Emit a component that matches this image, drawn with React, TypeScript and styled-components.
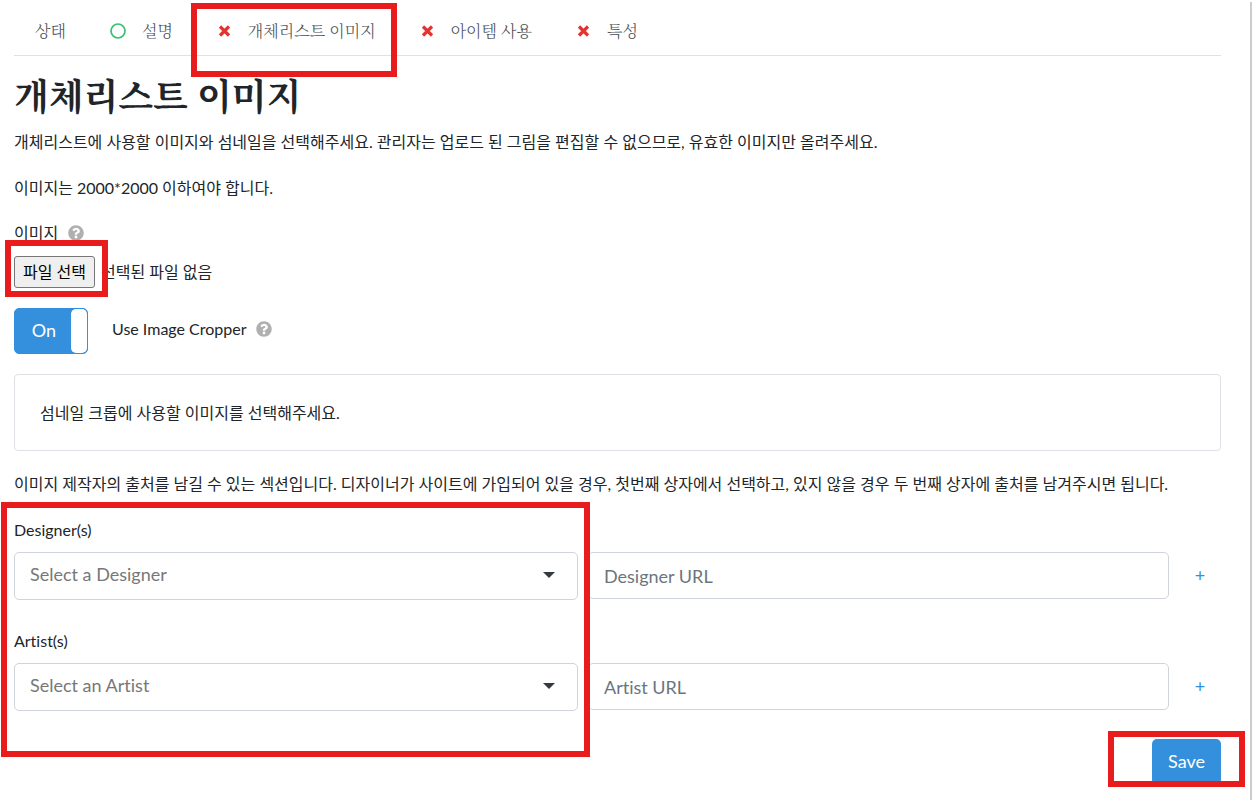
import React, { useRef, useState } from "react";
import styled, { createGlobalStyle } from "styled-components";

const sans = `Lato, "Noto Sans CJK KR", sans-serif`;
const serif = `"Noto Serif CJK KR", "Noto Sans CJK KR", serif`;
const blue = "#3490dc";
const line = "#dee2e6";
const field = "#ced4da";

const GlobalStyle = createGlobalStyle`
  *, *::before, *::after { box-sizing: border-box; }
  body {
    margin: 0;
    background: #fff;
    color: #212529;
    font: 16px/24px ${sans};
    font-variant-ligatures: none;
  }
  button, input, select { font-family: inherit; font-variant-ligatures: none; }
  h1, p { margin: 0; }
`;

const Page = styled.main`
  margin-top: 2px;
  min-height: calc(100vh - 2px);
  padding: 0 29px 12px 14px;
  border-right: 2px solid #ccc;
`;

const Tabs = styled.nav`
  display: flex;
  align-items: center;
  height: 54px;
  padding: 4px 22px 0 21px;
  gap: 44px;
  border-bottom: 1px solid ${line};
`;

const Tab = styled.a`
  position: relative;
  display: flex;
  align-items: center;
  gap: 16px;
  color: #495057;
  font: 300 16px/24px ${serif};
  text-decoration: none;
  white-space: nowrap;
`;

const Highlight = styled.span<{ $inset: string }>`
  position: absolute;
  inset: ${(p) => p.$inset};
  z-index: 2;
  border: 6px solid #e81c1c;
  pointer-events: none;
`;

const Title = styled.h1`
  margin-top: 15px;
  font: 700 36px/48px ${serif};
`;

const Paragraph = styled.p<{ $top: number }>`
  margin-top: ${(p) => p.$top}px;
`;

const LabelRow = styled.div`
  display: flex;
  align-items: center;
  gap: 10px;
  margin-top: 21px;
`;

const FileRow = styled.div`
  display: flex;
  align-items: center;
  gap: 6px;
  margin-top: 11px;
`;

const Anchor = styled.span`
  position: relative;
  display: inline-flex;
`;

const FileButton = styled.button`
  height: 32px;
  padding: 0 8px 2px;
  border: 1px solid #767676;
  border-radius: 3px;
  background: #efefef;
  color: #000;
  font-size: 16px;
`;

const ToggleRow = styled.div`
  display: flex;
  align-items: center;
  gap: 24px;
  margin-top: 20px;
`;

const ToggleCaption = styled.div`
  display: flex;
  align-items: center;
  gap: 10px;
  padding-bottom: 4px;
`;

const Toggle = styled.label`
  position: relative;
  display: flex;
  width: 74px;
  height: 46px;
  overflow: hidden;
  border: 1px solid ${blue};
  border-radius: 5px;
  background: ${blue};
  color: #fff;
  font-size: 18px;
  line-height: 43px;
  cursor: pointer;
`;

const ToggleInput = styled.input`
  position: absolute;
  inset: 0;
  margin: 0;
  opacity: 0;
`;

const ToggleText = styled.span`
  flex: 1;
  padding-left: 2px;
  text-align: center;
`;

const Knob = styled.span`
  width: 16px;
  border-radius: 5px;
  background: #fff;
`;

const Card = styled.section`
  margin-top: 20px;
  padding: 26px 25px 25px;
  border: 1px solid ${line};
  border-radius: 4px;
`;

const Credits = styled.div`
  display: grid;
  grid-template-columns: 564fr 10px 581fr 52px;
  grid-template-rows: 24px 67px 24px 48px;
  row-gap: 10px;
  margin-top: 22px;
`;

const CreditsHighlight = styled.span`
  grid-area: 1 / 1 / 5 / 2;
  z-index: 2;
  margin: -16px -12px -46px -13px;
  border: 6px solid #e81c1c;
  pointer-events: none;
`;

const FieldLabel = styled.label<{ $row: number }>`
  grid-row: ${(p) => p.$row};
  grid-column: 1;
`;

const SelectBox = styled.div<{ $row: number }>`
  position: relative;
  grid-row: ${(p) => p.$row};
  grid-column: 1;
`;

const Select = styled.select`
  appearance: none;
  width: 100%;
  height: 48px;
  padding: 0 40px 4px 15px;
  border: 1px solid ${field};
  border-radius: 5px;
  background: #fff;
  color: #777;
  font-size: 18px;
`;

const Caret = styled.svg`
  position: absolute;
  top: 20px;
  right: 23px;
  pointer-events: none;
`;

const UrlInput = styled.input<{ $row: number }>`
  grid-row: ${(p) => p.$row};
  grid-column: 3;
  width: 100%;
  height: 47px;
  padding: 0 15px;
  border: 1px solid ${field};
  border-radius: 5px;
  color: #495057;
  font-size: 18px;
  &::placeholder { color: #6c757d; opacity: 1; }
`;

const AddLink = styled.a<{ $row: number }>`
  grid-row: ${(p) => p.$row};
  grid-column: 4;
  padding-left: 10px;
  color: ${blue};
  font-size: 18px;
  line-height: 46px;
  text-align: center;
  text-decoration: none;
`;

const Actions = styled.div`
  display: flex;
  justify-content: flex-end;
  margin-top: 28px;
`;

const SaveButton = styled.button`
  height: 46px;
  padding: 0 16px 2px;
  border: 0;
  border-radius: 5px;
  background: ${blue};
  color: #fff;
  font-size: 18px;
`;

const Cross = () => (
  <svg width="15" height="14" viewBox="0 0 15 14" aria-hidden="true">
    <path d="M3 2.5 12 11.5M12 2.5 3 11.5" stroke="#e3342f" strokeWidth="3.2" />
  </svg>
);

const Circle = () => (
  <svg width="16" height="16" viewBox="0 0 16 16" aria-hidden="true">
    <circle cx="8" cy="8" r="7" fill="none" stroke="#38c172" strokeWidth="1.7" />
  </svg>
);

const Help = () => (
  <svg width="16" height="16" viewBox="0 0 512 512" role="img" aria-label="Help">
    <path
      fill="#b0b0b0"
      d="M504 256c0 136.997-111.043 248-248 248S8 392.997 8 256C8 119.083 119.043 8 256 8s248 111.083 248 248zM262.655 90c-54.497 0-89.255 22.957-116.549 63.758-3.536 5.286-2.353 12.415 2.715 16.258l34.699 26.31c5.205 3.947 12.621 3.008 16.665-2.122 17.864-22.658 30.113-35.797 57.303-35.797 20.429 0 45.698 13.148 45.698 32.958 0 14.976-12.363 22.667-32.534 33.976C247.128 238.528 216 254.941 216 296v4c0 6.627 5.373 12 12 12h56c6.627 0 12-5.373 12-12v-1.333c0-28.462 83.186-29.647 83.186-106.667 0-58.002-60.165-102-116.531-102zM256 338c-25.365 0-46 20.635-46 46 0 25.364 20.635 46 46 46s46-20.636 46-46c0-25.365-20.635-46-46-46z"
    />
  </svg>
);

const credits = [
  { id: "designer", label: "Designer(s)", prompt: "Select a Designer", url: "Designer URL" },
  { id: "artist", label: "Artist(s)", prompt: "Select an Artist", url: "Artist URL" },
];

export default function App() {
  const file = useRef<HTMLInputElement>(null);
  const [cropper, setCropper] = useState(true);

  return (
    <>
      <GlobalStyle />
      <Page>
        <Tabs>
          <Tab href="#status">상태</Tab>
          <Tab href="#description"><Circle />설명</Tab>
          <Tab href="#image">
            <Cross />개체리스트 이미지
            <Highlight $inset="-16px -21px -34px -26px" />
          </Tab>
          <Tab href="#items"><Cross />아이템 사용</Tab>
          <Tab href="#traits"><Cross />특성</Tab>
        </Tabs>

        <Title>개체리스트 이미지</Title>
        <Paragraph $top={11}>
          개체리스트에 사용할 이미지와 섬네일을 선택해주세요. 관리자는 업로드 된 그림을 편집할 수 없으므로, 유효한 이미지만 올려주세요.
        </Paragraph>
        <Paragraph $top={22}>이미지는 2000*2000 이하여야 합니다.</Paragraph>

        <LabelRow>
          <label htmlFor="image-file">이미지</label>
          <Help />
        </LabelRow>
        <FileRow>
          <Anchor>
            <FileButton type="button" onClick={() => file.current?.click()}>파일 선택</FileButton>
            <Highlight $inset="-16px -13px -9px -9px" />
          </Anchor>
          <input ref={file} id="image-file" type="file" hidden />
          <span>선택된 파일 없음</span>
        </FileRow>

        <ToggleRow>
          <Toggle>
            <ToggleInput
              id="use-cropper"
              type="checkbox"
              checked={cropper}
              onChange={(e) => setCropper(e.target.checked)}
            />
            {!cropper && <Knob />}
            <ToggleText>{cropper ? "On" : "Off"}</ToggleText>
            {cropper && <Knob />}
          </Toggle>
          <ToggleCaption>
            <label htmlFor="use-cropper">Use Image Cropper</label>
            <Help />
          </ToggleCaption>
        </ToggleRow>

        <Card>섬네일 크롭에 사용할 이미지를 선택해주세요.</Card>

        <Paragraph $top={21}>
          이미지 제작자의 출처를 남길 수 있는 섹션입니다. 디자이너가 사이트에 가입되어 있을 경우, 첫번째 상자에서 선택하고, 있지 않을 경우 두 번째 상자에 출처를 남겨주시면 됩니다.
        </Paragraph>

        <Credits>
          {credits.map((c, i) => (
            <React.Fragment key={c.id}>
              <FieldLabel $row={i * 2 + 1} htmlFor={c.id}>{c.label}</FieldLabel>
              <SelectBox $row={i * 2 + 2}>
                <Select id={c.id}>
                  <option>{c.prompt}</option>
                </Select>
                <Caret width="12" height="6" viewBox="0 0 12 6" aria-hidden="true">
                  <path d="M0 0H12L6 6Z" fill="#343a40" />
                </Caret>
              </SelectBox>
              <UrlInput $row={i * 2 + 2} placeholder={c.url} aria-label={c.url} />
              <AddLink $row={i * 2 + 2} href={`#add-${c.id}`}>+</AddLink>
            </React.Fragment>
          ))}
          <CreditsHighlight />
        </Credits>

        <Actions>
          <Anchor>
            <SaveButton type="submit">Save</SaveButton>
            <Highlight $inset="-8px -24px -2px -44px" />
          </Anchor>
        </Actions>
      </Page>
    </>
  );
}
